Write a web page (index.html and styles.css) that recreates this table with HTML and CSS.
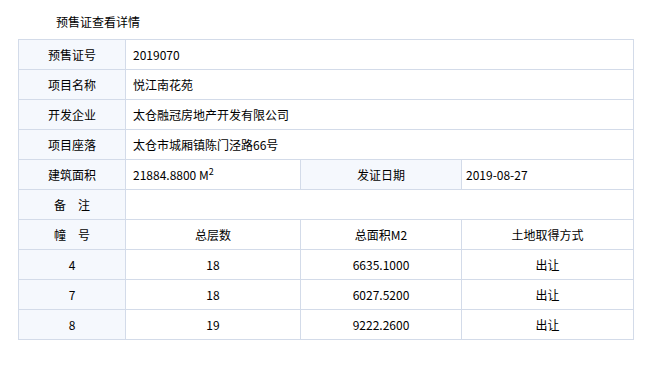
FILE: index.html
```html
<!DOCTYPE html>
<html lang="zh-CN">
<head>
  <meta charset="UTF-8" />
  <title>预售证查看详情</title>
  <link rel="stylesheet" href="styles.css">
</head>
<body>
  <div class="page">
    <div class="title">预售证查看详情</div>

    <table class="detail">
      <colgroup>
        <col class="c1"><col class="c2"><col class="c3"><col class="c4">
      </colgroup>
      <tr>
        <td class="label">预售证号</td>
        <td class="value" colspan="3">2019070</td>
      </tr>
      <tr>
        <td class="label">项目名称</td>
        <td class="value" colspan="3">悦江南花苑</td>
      </tr>
      <tr>
        <td class="label">开发企业</td>
        <td class="value" colspan="3">太仓融冠房地产开发有限公司</td>
      </tr>
      <tr>
        <td class="label">项目座落</td>
        <td class="value" colspan="3">太仓市城厢镇陈门泾路66号</td>
      </tr>
      <tr>
        <td class="label">建筑面积</td>
        <td class="value">21884.8800 M<sup>2</sup></td>
        <td class="label">发证日期</td>
        <td class="value tight">2019-08-27</td>
      </tr>
      <tr>
        <td class="label">备&emsp;注</td>
        <td class="value" colspan="3"></td>
      </tr>
      <tr>
        <td class="label">幢&emsp;号</td>
        <td>总层数</td>
        <td>总面积M2</td>
        <td>土地取得方式</td>
      </tr>
      <tr>
        <td class="label">4</td>
        <td>18</td>
        <td>6635.1000</td>
        <td>出让</td>
      </tr>
      <tr>
        <td class="label">7</td>
        <td>18</td>
        <td>6027.5200</td>
        <td>出让</td>
      </tr>
      <tr>
        <td class="label">8</td>
        <td>19</td>
        <td>9222.2600</td>
        <td>出让</td>
      </tr>
    </table>
  </div>
</body>
</html>
```

FILE: styles.css
```css
* {
  box-sizing: border-box;
}

body {
  margin: 0;
  background: #fff;
  color: #000;
  font-family: "Noto Sans CJK SC", "Noto Sans", sans-serif;
  font-size: 12px;
}

.page {
  padding: 0 18px;
}

.title {
  height: 39px;
  line-height: 43px;
  padding-left: 38px;
}

.detail {
  width: 615px;
  border-collapse: collapse;
  table-layout: fixed;
  border: 1px solid #d3dbe9;
}

.c1 { width: 107px; }
.c2 { width: 175px; }
.c3 { width: 161px; }
.c4 { width: 172px; }

.detail tr {
  height: 30px;
}

.detail td {
  border: 1px solid #d3dbe9;
  padding: 0;
  text-align: center;
  vertical-align: middle;
  line-height: 16px;
}

.detail td.label {
  background: #f5f8fd;
}

.detail td.value {
  text-align: left;
  padding-left: 7px;
}

.detail td.tight {
  padding-left: 4px;
}

sup {
  font-size: 9px;
  line-height: 0;
  vertical-align: 5px;
}
```
